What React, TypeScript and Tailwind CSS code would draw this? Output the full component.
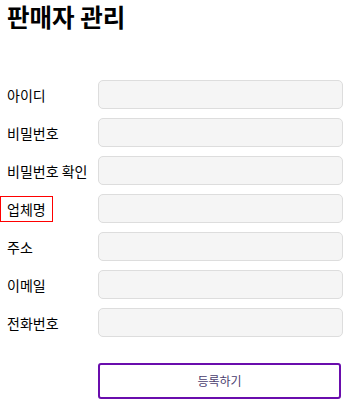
const FONT = "font-['Malgun_Gothic','Noto_Sans_CJK_KR',sans-serif]";

const fields = [
  { id: "userId", label: "아이디", type: "text" },
  { id: "password", label: "비밀번호", type: "password" },
  { id: "passwordConfirm", label: "비밀번호 확인", type: "password" },
  { id: "company", label: "업체명", type: "text", highlighted: true },
  { id: "address", label: "주소", type: "text" },
  { id: "email", label: "이메일", type: "email" },
  { id: "phone", label: "전화번호", type: "tel" },
];

export default function App() {
  return (
    <div className={`${FONT} min-h-[400px] w-[347px] bg-white text-black`}>
      <h1 className="pl-[7px] pt-[1px] text-[24.5px] font-bold leading-[32px]">
        판매자 관리
      </h1>

      <form
        className="mt-[47px] flex flex-col gap-[9px] pr-[4px]"
        onSubmit={(e) => e.preventDefault()}
      >
        {fields.map((f) => (
          <div key={f.id} className="flex h-[29px] items-center">
            <div className="w-[98px] shrink-0">
              <label
                htmlFor={f.id}
                className={`inline-block border px-[6px] py-[2px] text-[14px] leading-[20px] ${
                  f.highlighted ? "border-[#ff0000]" : "border-transparent"
                }`}
              >
                {f.label}
              </label>
            </div>
            <input
              id={f.id}
              type={f.type}
              className="h-[29px] flex-1 rounded-[5px] border border-[#dddddd] bg-[#f5f5f5] px-2 text-[14px] outline-none"
            />
          </div>
        ))}

        <div className="mt-[17px] pl-[98px]">
          <button
            type="submit"
            className="h-[36px] w-[243px] rounded-[3px] border-2 border-[#6a0dad] bg-white text-[12px] text-[#4a3d6e]"
          >
            등록하기
          </button>
        </div>
      </form>
    </div>
  );
}
